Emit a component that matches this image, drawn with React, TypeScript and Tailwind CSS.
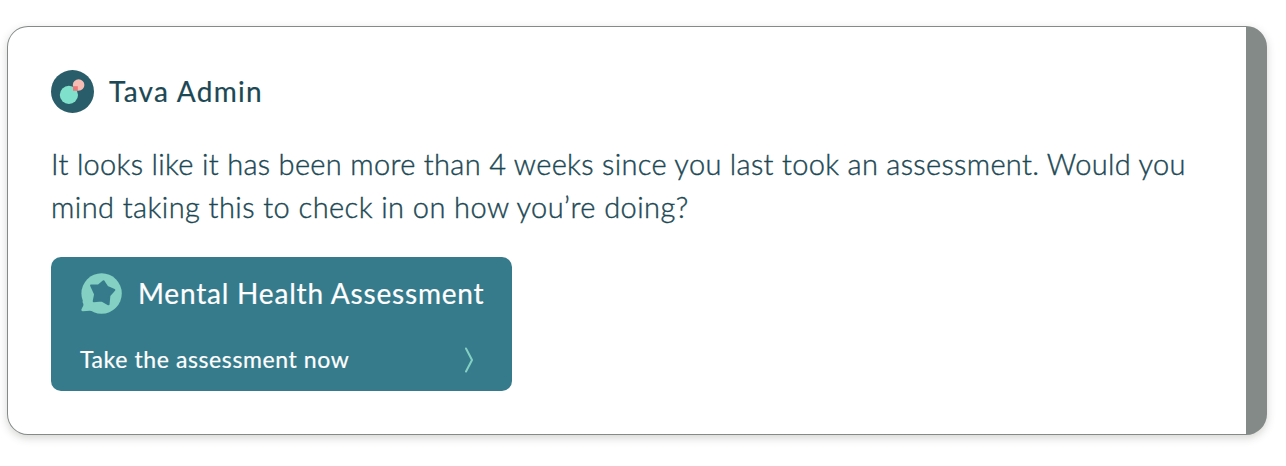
import React from "react";

const TavaLogo: React.FC = () => (
  <svg className="h-[43px] w-[43px] shrink-0" viewBox="0 0 43 43" aria-hidden="true">
    <circle cx="21.5" cy="21.5" r="21.5" fill="#285d69" />
    <circle cx="27.6" cy="15" r="5.8" fill="#f6bdb5" />
    <circle cx="17.9" cy="24.9" r="9.1" fill="#7fe1cb" />
    <path d="M22 16.2h4.8v4.6H22z" fill="#ee7778" />
  </svg>
);

const AssessmentIcon: React.FC = () => (
  <svg className="h-[42px] w-[42px] shrink-0" viewBox="0 0 42 42" aria-hidden="true">
    <circle cx="21.6" cy="21.5" r="20.2" fill="#84d0c3" />
    <path
      fill="#84d0c3"
      d="M2.300 29.500l1 2.300c.3.800.2 1.500-.2 2.300l-1.500 2.900c-.6 1.200-.1 2.200 1.200 2.200l7-.5c1-.1 1.800.1 2.700.6l8-14z"
    />
    <path
      fill="#367b8b"
      stroke="#367b8b"
      strokeWidth="2.200"
      strokeLinejoin="round"
      d="M23.500 9.300L27.300 15 34.200 18 29.300 23.500 28.500 32.200 21.500 28.300 13.800 29.200 15.200 22.200 11.200 13.500 18.500 13.500z"
    />
  </svg>
);

const Chevron: React.FC = () => (
  <svg className="h-[26px] w-[10px] shrink-0" viewBox="0 0 10 26" aria-hidden="true">
    <path
      d="M2 1.500l6 11.500-6 11.500"
      fill="none"
      stroke="#84d0c3"
      strokeWidth="2"
      strokeLinecap="round"
      strokeLinejoin="round"
    />
  </svg>
);

const AssessmentCard: React.FC = () => {
  return (
    <button className="mt-[28px] block h-[134px] w-[461px] rounded-[10px] bg-[#367b8b] pt-[15px] pr-[38px] pb-[14px] pl-[29px] text-left text-white [-webkit-text-stroke:0.2px]">
      <div className="flex h-[42px] items-center gap-4">
        <AssessmentIcon />
        <span className="text-[28px] leading-[42px] tracking-[0.8px] whitespace-nowrap">
          Mental Health Assessment
        </span>
      </div>
      <div className="mt-[28px] flex h-[35px] items-center justify-between">
        <span className="pb-px text-[23px] leading-[34px] tracking-[0.6px] whitespace-nowrap">
          Take the assessment now
        </span>
        <Chevron />
      </div>
    </button>
  );
};

export default function App() {
  return (
    <main className="h-[466px] bg-white pt-[26px] pl-[7px] font-['Lato',sans-serif] text-[#1b4854]">
      <section className="h-[409px] w-[1260px] rounded-[21px] border border-r-[21px] border-[#838a88] bg-white pt-[43px] pl-[43px] shadow-[0_3px_8px_rgba(60,60,50,0.22)]">
        <header className="flex h-[43px] items-center gap-[15px]">
          <TavaLogo />
          <h1 className="text-[28px] leading-[43px] tracking-[1.300px] whitespace-nowrap [-webkit-text-stroke:0.2px]">
            Tava Admin
          </h1>
        </header>
        <p className="mt-[29px] h-[87px] text-[29px] leading-[43px] font-light whitespace-nowrap [-webkit-text-stroke:0.4px]">
          <span className="block tracking-[0.32px]">
            It looks like it has been more than 4 weeks since you last took an assessment. Would you
          </span>
          <span className="block tracking-[0.43px]">mind taking this to check in on how you’re doing?</span>
        </p>
        <AssessmentCard />
      </section>
    </main>
  );
}
